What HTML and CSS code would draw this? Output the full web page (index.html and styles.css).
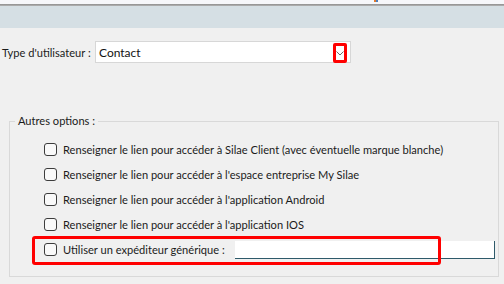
FILE: index.html
```html
<!DOCTYPE html>
<html lang="fr">
<head>
<meta charset="utf-8">
<title>Type d'utilisateur</title>
<link rel="stylesheet" href="styles.css">
</head>
<body>
<div class="top-strip"><span class="tiny-icon"><i class="o"></i><i class="b"></i></span></div>
<div class="top-line"></div>
<div class="top-band"></div>

<div class="type-row">
  <label class="type-label">Type d'utilisateur :</label>
  <div class="combo">
    <span class="combo-value">Contact</span>
    <span class="combo-arrow">
      <svg width="8" height="5" viewBox="0 0 8 5"><path d="M0.5 0.5 L4 4 L7.5 0.5" fill="none" stroke="#6d6d6d" stroke-width="1"/></svg>
    </span>
  </div>
</div>

<fieldset class="options">
  <legend>Autres options :</legend>
  <div class="opt"><span class="cb"></span><span class="opt-text">Renseigner le lien pour accéder à Silae Client (avec éventuelle marque blanche)</span></div>
  <div class="opt"><span class="cb"></span><span class="opt-text">Renseigner le lien pour accéder à l'espace entreprise My Silae</span></div>
  <div class="opt"><span class="cb"></span><span class="opt-text">Renseigner le lien pour accéder à l'application Android</span></div>
  <div class="opt"><span class="cb"></span><span class="opt-text">Renseigner le lien pour accéder à l'application IOS</span></div>
  <div class="opt opt-last"><span class="cb"></span><span class="opt-text">Utiliser un expéditeur générique :</span><span class="text-input"></span><span class="highlight"></span></div>
</fieldset>
</body>
</html>
```

FILE: styles.css
```css
html, body {
  margin: 0;
  padding: 0;
}
body {
  width: 504px;
  height: 284px;
  overflow: hidden;
  background: #f0f0f0;
  font-family: Lato, "Liberation Sans", Arial, sans-serif;
  font-size: 11.1px;
  color: #1b1b1b;
}
.top-strip {
  height: 4px;
  background: #f6f7fa;
  display: flex;
  align-items: flex-start;
}
.tiny-icon {
  display: flex;
  margin-left: 374px;
  height: 2px;
}
.tiny-icon i {
  display: block;
  width: 2px;
  height: 2px;
}
.tiny-icon .o { background: #e07a2c; }
.tiny-icon .b { background: #4a7fbf; }
.top-line {
  height: 2px;
  background: linear-gradient(#8e8e8e, #b4b4b4);
}
.top-band {
  height: 22px;
  background: #d5dfe4;
}
.type-row {
  display: flex;
  align-items: center;
  margin-top: 13px;
  padding-left: 2px;
  height: 22px;
}
.type-label {
  width: 93px;
  white-space: nowrap;
}
.combo {
  position: relative;
  width: 251px;
  height: 20px;
  background: #fff;
  border: 1px solid #d7d7d7;
  display: flex;
  align-items: center;
  padding-left: 3px;
  font-size: 12px;
}
.combo-value {
  color: #111;
}
.combo-arrow {
  position: absolute;
  left: 237px;
  top: 1px;
  width: 8px;
  height: 14px;
  border: 3px solid #f00;
  border-radius: 2px;
  background: #fff;
  display: flex;
  align-items: center;
  justify-content: center;
}
.options {
  margin: 51px 6px 0 9px;
  padding: 9px 0 14px 0;
  border: 1px solid #d9d9d9;
  width: 490px;
  box-sizing: border-box;
}
.options legend {
  margin-left: 5px;
  padding: 0 3px;
  line-height: 14px;
}
.opt {
  position: relative;
  display: flex;
  align-items: center;
  height: 25px;
  padding-left: 34px;
}
.cb {
  width: 11px;
  height: 11px;
  border: 1px solid #3c3c3c;
  border-radius: 3px;
  background: #f9f9f9;
  margin-right: 6px;
  flex: none;
}
.opt-text {
  white-space: nowrap;
}
.text-input {
  margin-left: auto;
  margin-right: 3px;
  width: 259px;
  height: 17px;
  background: #fff;
  border-right: 1px solid #2e5a6a;
  border-bottom: 1px solid #2e5a6a;
  flex: none;
}
.highlight {
  position: absolute;
  left: 22px;
  top: -1px;
  width: 403px;
  height: 23px;
  border: 3px solid #ff0000;
  border-radius: 3px;
}
```
